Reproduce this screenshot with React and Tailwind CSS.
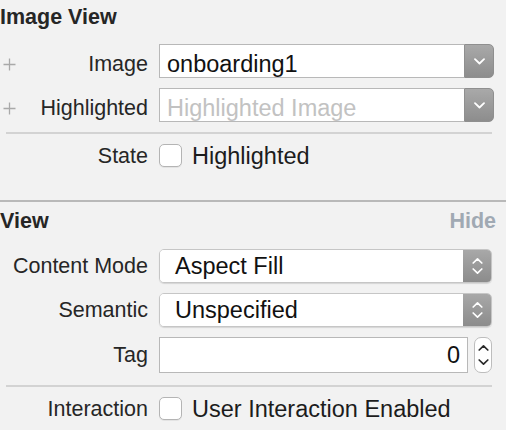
import React from "react";

const font = { fontFamily: '"Liberation Sans", Arial, sans-serif' };

function Plus() {
  return (
    <svg width="13" height="13" viewBox="0 0 13 13" className="block">
      <path d="M6.5 0.5V12.5M0.5 6.5H12.5" stroke="#a9a9a9" strokeWidth="1.3" />
    </svg>
  );
}

function ChevronDown({ color = "#fff" }) {
  return (
    <svg width="11" height="7" viewBox="0 0 11 7" className="block">
      <path d="M1 1.2L5.5 5.5L10 1.2" fill="none" stroke={color} strokeWidth="1.8" strokeLinecap="round" strokeLinejoin="round" />
    </svg>
  );
}

function UpDown({ color = "#fff", h = 18 }) {
  return (
    <svg width="11" height={h} viewBox={"0 0 11 " + h} className="block">
      <path d="M1.2 6L5.5 1.8L9.8 6" fill="none" stroke={color} strokeWidth="1.7" strokeLinecap="round" strokeLinejoin="round" />
      <path d={"M1.2 " + (h - 6) + "L5.5 " + (h - 1.8) + "L9.8 " + (h - 6)} fill="none" stroke={color} strokeWidth="1.7" strokeLinecap="round" strokeLinejoin="round" />
    </svg>
  );
}

function Checkbox() {
  return (
    <div className="w-[23px] h-[23px] shrink-0 rounded-[5px] bg-white border border-[#b4b4b4] shadow-[0_1px_0_rgba(0,0,0,0.06)]" />
  );
}

function Combo({ value, placeholder }) {
  return (
    <div className="flex w-[335px] h-[34px]">
      <div className="flex-1 flex items-center bg-white border border-[#b8b8b8] border-r-0 pl-[7px]">
        <span className={"pt-[6px] leading-[24px] text-[23.5px] " + (value ? "text-[#111]" : "text-[#c2c2c2]")}>
          {value || placeholder}
        </span>
      </div>
      <div className="w-[30px] flex items-center justify-center rounded-r-[5px] bg-gradient-to-b from-[#a9a9a9] to-[#8d8d8d] border border-[#8f8f8f]">
        <ChevronDown />
      </div>
    </div>
  );
}

function Popup({ value }) {
  return (
    <div className="flex w-[333px] h-[34px] rounded-[5px] border border-[#c6c6c6] shadow-[0_1px_1px_rgba(0,0,0,0.12)] overflow-hidden">
      <div className="flex-1 flex items-center bg-white pl-[15px]">
        <span className="leading-[24px] text-[23.5px] text-[#111]">{value}</span>
      </div>
      <div className="w-[28px] flex items-center justify-center bg-gradient-to-b from-[#a8a8a8] to-[#8c8c8c]">
        <UpDown />
      </div>
    </div>
  );
}

function Row({ label, plus, children, className = "", shift = false }) {
  return (
    <div className={"flex items-center " + className}>
      <div className="w-[148px] shrink-0 flex items-center justify-between">
        <div className={"pl-[3px] " + (shift ? "pt-[6px]" : "")}>{plus ? <Plus /> : null}</div>
        <span className={"leading-[24px] text-[#262626] whitespace-nowrap " + (shift ? "pt-[6px]" : "")}>{label}</span>
      </div>
      <div className="ml-[11px] flex items-center">{children}</div>
    </div>
  );
}

export default function App() {
  return (
    <div style={font} className="w-[506px] h-[430px] bg-[#f2f2f2] text-[21.5px] overflow-hidden">
      <div className="pt-[5px] leading-[24px] font-bold text-[#262626]">Image View</div>

      <Row label="Image" plus shift className="mt-[15px]">
        <Combo value="onboarding1" />
      </Row>
      <Row label="Highlighted" plus shift className="mt-[10px]">
        <Combo placeholder="Highlighted Image" />
      </Row>

      <div className="mt-[10px] ml-[6px] w-[486px] h-[2px] bg-[#d3d3d3]" />

      <Row label="State" className="mt-[10px] h-[23px]">
        <Checkbox />
        <span className="ml-[10px] leading-[24px] text-[23.5px] text-[#1c1c1c]">Highlighted</span>
      </Row>

      <div className="mt-[33px] w-full h-[2px] bg-[#b9b9b9]" />

      <div className="mt-[7px] flex justify-between leading-[24px] font-bold">
        <span className="text-[#262626]">View</span>
        <span className="mr-[10px] text-[#a0a9b3]">Hide</span>
      </div>

      <Row label="Content Mode" className="mt-[16px]">
        <Popup value="Aspect Fill" />
      </Row>
      <Row label="Semantic" className="mt-[10px]">
        <Popup value="Unspecified" />
      </Row>
      <Row label="Tag" className="mt-[10px]">
        <div className="w-[309px] h-[36px] bg-white border border-[#b8b8b8] flex items-center justify-end pr-[7px]">
          <span className="leading-[24px] text-[23.5px] text-[#111]">0</span>
        </div>
        <div className="ml-[6px] w-[18px] h-[36px] rounded-[7px] bg-white border border-[#bdbdbd] flex items-center justify-center">
          <UpDown color="#2a2a2a" h={22} />
        </div>
      </Row>

      <div className="mt-[12px] ml-[6px] w-[486px] h-[2px] bg-[#d3d3d3]" />

      <Row label="Interaction" className="mt-[10px] h-[23px]">
        <Checkbox />
        <span className="ml-[10px] leading-[24px] text-[23.5px] text-[#1c1c1c]">User Interaction Enabled</span>
      </Row>
    </div>
  );
}
